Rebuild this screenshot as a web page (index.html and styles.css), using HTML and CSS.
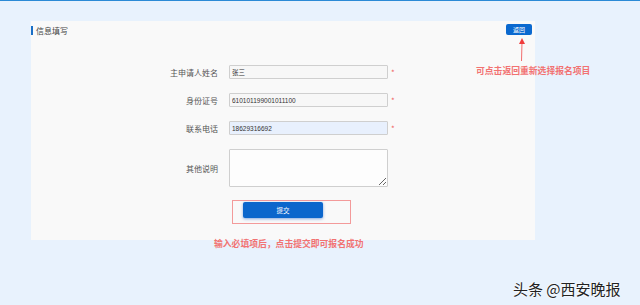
FILE: index.html
```html
<!DOCTYPE html>
<html lang="zh-CN">
<head>
    <meta charset="UTF-8">
    <title>信息填写</title>
    <link rel="stylesheet" href="styles.css">
</head>
<body>
    <div class="page">
        <div class="card">
            <div class="card-head">
                <div class="title">信息填写</div>
                <button class="btn-back">返回</button>
            </div>
            <form class="form">
                <div class="row">
                    <label class="label">主申请人姓名</label>
                    <input class="field" type="text" value="张三">
                    <span class="req">*</span>
                </div>
                <div class="row">
                    <label class="label">身份证号</label>
                    <input class="field" type="text" value="610101199001011100">
                    <span class="req">*</span>
                </div>
                <div class="row">
                    <label class="label">联系电话</label>
                    <input class="field field-filled" type="text" value="18629316692">
                    <span class="req">*</span>
                </div>
                <div class="row row-area">
                    <label class="label">其他说明</label>
                    <textarea class="field area"></textarea>
                </div>
                <div class="submit-box">
                    <button type="button" class="btn-submit">提交</button>
                </div>
            </form>
        </div>

        <!-- annotations drawn over the screenshot -->
        <svg class="arrow" width="12" height="24" viewBox="0 0 12 24">
            <path d="M6 4 L5.5 23" stroke="#f26d6d" stroke-width="1" fill="none"/>
            <path d="M6 0 L9 6 L3 6 Z" fill="#f03c3c"/>
        </svg>
        <div class="note note-back">可点击返回重新选择报名项目</div>
        <div class="note note-submit">输入必填项后，点击提交即可报名成功</div>
        <div class="watermark">头条 @西安晚报</div>
    </div>
</body>
</html>
```

FILE: styles.css
```css
* {
    box-sizing: border-box;
}

body {
    margin: 0;
    background: #e8f2fd;
    font-family: "Noto Sans CJK SC", "Noto Sans", sans-serif;
    color: #333;
}

.page {
    position: relative;
    height: 305px;
    border-top: 1px solid #2b8ad6;
    padding-top: 20px;
    overflow: hidden;
}

.card {
    margin-left: 31px;
    width: 504px;
    height: 219px;
    background: #f9f9f9;
    padding: 3px 3px 0 0;
}

.card-head {
    display: flex;
    justify-content: space-between;
    align-items: flex-start;
}

.title {
    margin-top: 2px;
    border-left: 2px solid #1a6fc6;
    padding-left: 3px;
    font-size: 8px;
    line-height: 9px;
    color: #444;
}

.btn-back {
    width: 26px;
    height: 11px;
    padding: 0;
    border: none;
    border-radius: 2px;
    background: #0b69cf;
    color: #fff;
    font-family: inherit;
    font-size: 6px;
    line-height: 11px;
}

.form {
    margin-top: 30px;
}

.row {
    display: flex;
    align-items: center;
    margin-bottom: 14px;
}

.row-area {
    margin-bottom: 13px;
}

.label {
    width: 188px;
    padding-right: 1px;
    text-align: right;
    font-size: 8px;
    color: #555;
}

.field {
    margin-left: 10px;
    width: 159px;
    height: 14px;
    padding: 0 2px;
    border: 1px solid #cfcfcf;
    border-radius: 1px;
    background: #f7f7f7;
    font-family: "Liberation Sans", "Noto Sans CJK SC", sans-serif;
    font-size: 6.5px;
    color: #333;
    outline: none;
}

.field-filled {
    background: #e8f0fd;
}

.area {
    height: 38px;
    resize: both;
    background: #fdfdfd;
}

.req {
    margin-left: 3px;
    color: #f06060;
    font-size: 8px;
}

.submit-box {
    margin-left: 201px;
    width: 119px;
    height: 24px;
    border: 1px solid #f39a9a;
    padding: 1px 0 0 10px;
}

.btn-submit {
    display: block;
    width: 80px;
    height: 16px;
    border: none;
    border-radius: 2px;
    background: #0b66cc;
    box-shadow: 0 1px 3px rgba(20, 90, 200, 0.5);
    color: #fff;
    font-family: inherit;
    font-size: 6.5px;
}

/* annotations */
.arrow {
    position: absolute;
    left: 516px;
    top: 37px;
}

.note {
    position: absolute;
    font-size: 8.8px;
    font-weight: bold;
    color: #f27272;
    line-height: 12px;
    white-space: nowrap;
}

.note-back {
    left: 476px;
    top: 64px;
}

.note-submit {
    left: 214px;
    top: 237px;
}

.watermark {
    position: absolute;
    left: 513px;
    top: 278px;
    font-size: 15px;
    line-height: 20px;
    color: #222;
    text-shadow: 0 0 2px #fff, 0 0 2px #fff;
}
```
